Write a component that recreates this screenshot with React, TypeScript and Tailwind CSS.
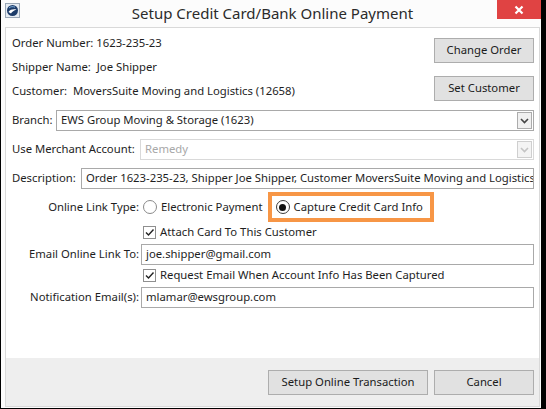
import React from "react";

function Btn({ w, children }: { w: string; children: React.ReactNode }) {
  return (
    <div
      className={`${w} h-[25px] border border-[#adadad] bg-[#e1e1e1] flex items-center justify-center text-[11.3px] text-[#1b1b1b]`}
    >
      {children}
    </div>
  );
}

function Chevron({ color }: { color: string }) {
  return (
    <svg width="9" height="6" viewBox="0 0 9 6">
      <path d="M1 1 L4.5 4.5 L8 1" fill="none" stroke={color} strokeWidth="1.6" />
    </svg>
  );
}

function Radio({ checked }: { checked?: boolean }) {
  return (
    <div
      className={`w-[14px] h-[14px] rounded-full border bg-white flex items-center justify-center shrink-0 ${
        checked ? "border-[#3c3c3c]" : "border-[#8a8a8a]"
      }`}
    >
      {checked && <div className="w-[7px] h-[7px] rounded-full bg-[#111]" />}
    </div>
  );
}

function Check() {
  return (
    <div className="w-[13px] h-[13px] border border-[#8f8f8f] bg-white flex items-center justify-center shrink-0">
      <svg width="11" height="11" viewBox="0 0 11 11">
        <path d="M2 5.5 L4.5 8 L9.5 2.5" fill="none" stroke="#222" strokeWidth="1.4" />
      </svg>
    </div>
  );
}

export default function App() {
  return (
    <div className="w-[546px] h-[409px] bg-black font-['Noto_Sans','Open_Sans',sans-serif] text-[11.3px] text-[#1e1e1e] overflow-hidden">
      <div className="ml-[1px] w-[540px] h-[408px] bg-[#fcfcfc] flex flex-col">
        {/* Title bar */}
        <div className="h-[27px] flex items-start shrink-0">
          <div className="w-[15px] h-[15px] mt-[3px] ml-[4px] border border-[#9aa7b6] bg-[#e6ecf3] flex items-center justify-center">
            <svg width="13" height="13" viewBox="0 0 13 13">
              <circle cx="6.5" cy="6.5" r="5.5" fill="#1d3c6a" />
              <path d="M2.5 8 C4 5.5 7 5 10.5 5.5 C8 6.5 6 7.5 5 9.5 Z" fill="#ffffff" />
              <path d="M3 4 C4.5 2.5 7 2.3 9 3.2" fill="none" stroke="#7fb0e0" strokeWidth="1" />
            </svg>
          </div>
          <div className="flex-1 h-[27px] flex items-center justify-center text-[15px] text-[#2b2b2b] pl-[28px]">
            Setup Credit Card/Bank Online Payment
          </div>
          <div className="w-[44px] h-[19px] bg-[#e04343] flex items-center justify-center">
            <svg width="10" height="10" viewBox="0 0 10 10">
              <path d="M1.5 1.5 L8.5 8.5 M8.5 1.5 L1.5 8.5" stroke="#fff" strokeWidth="2.2" />
            </svg>
          </div>
        </div>

        {/* Panel */}
        <div className="ml-[4px] w-[535px] h-[380px] border border-[#d9d9d9] bg-white flex flex-col">
          {/* Top section */}
          <div className="h-[82px] flex justify-between shrink-0">
            <div className="pl-[6px] pt-[3px] flex flex-col">
              <div className="h-[24px] flex items-center">Order Number: 1623-235-23</div>
              <div className="h-[24px] flex items-center">Shipper Name:&nbsp; Joe Shipper</div>
              <div className="h-[24px] flex items-center">Customer:&nbsp; MoversSuite Moving and Logistics (12658)</div>
            </div>
            <div className="pr-[5px] pt-[10px] flex flex-col gap-[13px]">
              <Btn w="w-[100px]">Change Order</Btn>
              <Btn w="w-[100px]">Set Customer</Btn>
            </div>
          </div>

          {/* Branch */}
          <div className="h-[21px] flex items-center pl-[6px] pr-[5px] shrink-0">
            <div className="w-[44px] shrink-0 whitespace-nowrap">Branch:</div>
            <div className="flex-1 h-[21px] border border-[#a9a9a9] bg-white flex items-center justify-between">
              <span className="pl-[4px]">EWS Group Moving &amp; Storage (1623)</span>
              <div className="w-[15px] h-[17px] mr-[1px] border border-[#acacac] bg-[#f0f0f0] flex items-center justify-center">
                <Chevron color="#444" />
              </div>
            </div>
          </div>

          {/* Merchant */}
          <div className="mt-[8px] h-[21px] flex items-center pl-[6px] pr-[5px] shrink-0">
            <div className="w-[128px] shrink-0 whitespace-nowrap">Use Merchant Account:</div>
            <div className="flex-1 h-[21px] border border-[#d9d9d9] bg-white flex items-center justify-between">
              <span className="pl-[4px] text-[#a8a8a8]">Remedy</span>
              <div className="w-[15px] h-[17px] mr-[1px] border border-[#cfcfcf] bg-[#f4f4f4] flex items-center justify-center">
                <Chevron color="#c4c4c4" />
              </div>
            </div>
          </div>

          {/* Description */}
          <div className="mt-[8px] h-[21px] flex items-center pl-[6px] pr-[5px] shrink-0">
            <div className="w-[69px] shrink-0 whitespace-nowrap">Description:</div>
            <div className="flex-1 min-w-0 h-[21px] border border-[#a9a9a9] bg-white flex items-center overflow-hidden">
              <span className="pl-[4px] whitespace-nowrap">
                Order 1623-235-23, Shipper Joe Shipper, Customer MoversSuite Moving and Logistics
              </span>
            </div>
          </div>

          {/* Online link type */}
          <div className="mt-[3px] h-[30px] flex items-center shrink-0">
            <div className="w-[133px] shrink-0 text-right whitespace-nowrap">Online Link Type:</div>
            <div className="ml-[4px] flex items-center">
              <Radio />
              <span className="ml-[4px]">Electronic Payment</span>
            </div>
            <div className="ml-[5px] h-[30px] border-[4px] border-[#f79646] flex items-center pl-[4px] pr-[7px]">
              <Radio checked />
              <span className="ml-[4px]">Capture Credit Card Info</span>
            </div>
          </div>

          {/* Attach */}
          <div className="mt-[2px] h-[16px] flex items-center pl-[137px] shrink-0">
            <Check />
            <span className="ml-[4px]">Attach Card To This Customer</span>
          </div>

          {/* Email */}
          <div className="mt-[4px] h-[21px] flex items-center pr-[5px] shrink-0">
            <div className="w-[133px] shrink-0 text-right whitespace-nowrap">Email Online Link To:</div>
            <div className="ml-[2px] flex-1 h-[21px] border border-[#a9a9a9] bg-white flex items-center">
              <span className="pl-[4px]">joe.shipper@gmail.com</span>
            </div>
          </div>

          {/* Request */}
          <div className="mt-[2px] h-[16px] flex items-center pl-[137px] shrink-0">
            <Check />
            <span className="ml-[4px]">Request Email When Account Info Has Been Captured</span>
          </div>

          {/* Notification */}
          <div className="mt-[4px] h-[21px] flex items-center pr-[5px] shrink-0">
            <div className="w-[133px] shrink-0 text-right whitespace-nowrap">Notification Email(s):</div>
            <div className="ml-[2px] flex-1 h-[21px] border border-[#a9a9a9] bg-white flex items-center">
              <span className="pl-[4px]">mlamar@ewsgroup.com</span>
            </div>
          </div>

          <div className="flex-1" />

          {/* Footer */}
          <div className="h-[48px] bg-[#eeeeee] flex justify-end items-start pt-[12px] pr-[5px] gap-[6px] shrink-0">
            <Btn w="w-[160px]">Setup Online Transaction</Btn>
            <Btn w="w-[100px]">Cancel</Btn>
          </div>
        </div>
      </div>
    </div>
  );
}
